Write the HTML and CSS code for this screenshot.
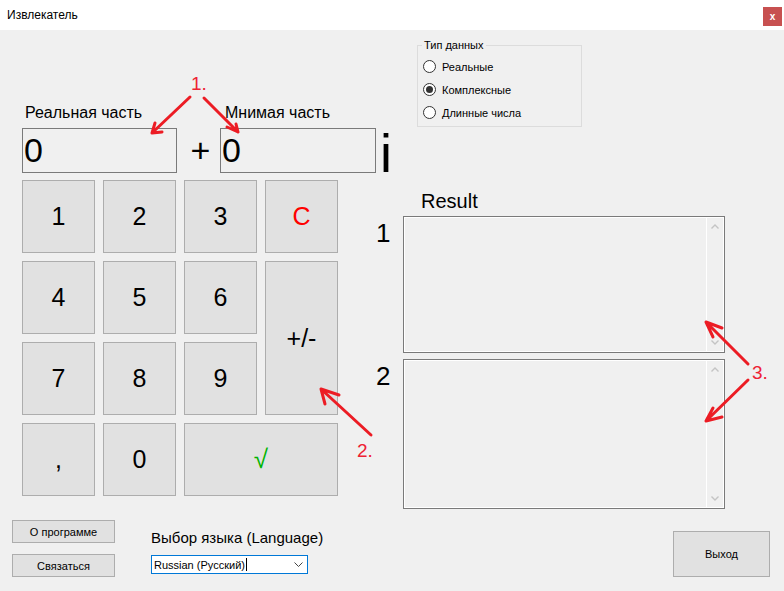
FILE: index.html
```html
<!DOCTYPE html>
<html lang="ru">
<head>
<meta charset="utf-8">
<title>Извлекатель</title>
<link rel="stylesheet" href="styles.css">
</head>
<body>
<div class="window">
  <div class="titlebar">
    <span class="title">Извлекатель</span>
    <span class="close">x</span>
  </div>

  <section class="top">
    <div class="entry">
      <div class="labels">
        <span class="re">Реальная часть</span>
        <span class="im">Мнимая часть</span>
      </div>
      <div class="inputs">
        <div class="field re">0</div>
        <span class="plus">+</span>
        <div class="field im">0</div>
        <span class="imag">i</span>
      </div>
    </div>
    <fieldset class="types">
      <legend>Тип данных</legend>
      <div class="radios">
        <div class="radio"><span class="dot"></span><span>Реальные</span></div>
        <div class="radio checked"><span class="dot"></span><span>Комплексные</span></div>
        <div class="radio"><span class="dot"></span><span>Длинные числа</span></div>
      </div>
    </fieldset>
  </section>

  <section class="middle">
    <div class="keypad">
      <div class="key">1</div>
      <div class="key">2</div>
      <div class="key">3</div>
      <div class="key clear">C</div>
      <div class="key">4</div>
      <div class="key">5</div>
      <div class="key">6</div>
      <div class="key pm">+/-</div>
      <div class="key">7</div>
      <div class="key">8</div>
      <div class="key">9</div>
      <div class="key">,</div>
      <div class="key">0</div>
      <div class="key ok">√</div>
    </div>
    <div class="results">
      <div class="res-head">Result</div>
      <div class="res-num">1</div>
      <div class="box">
        <div class="sb">
          <div class="arr"><svg width="8" height="5" viewBox="0 0 8 5"><path d="M0.5 4.5 L4 1 L7.5 4.5" fill="none" stroke="#c4c4c4" stroke-width="1.4"/></svg></div>
          <div class="arr"><svg width="8" height="5" viewBox="0 0 8 5"><path d="M0.5 0.5 L4 4 L7.5 0.5" fill="none" stroke="#c4c4c4" stroke-width="1.4"/></svg></div>
        </div>
      </div>
      <div class="res-num second">2</div>
      <div class="box second">
        <div class="sb">
          <div class="arr"><svg width="8" height="5" viewBox="0 0 8 5"><path d="M0.5 4.5 L4 1 L7.5 4.5" fill="none" stroke="#c4c4c4" stroke-width="1.4"/></svg></div>
          <div class="arr"><svg width="8" height="5" viewBox="0 0 8 5"><path d="M0.5 0.5 L4 4 L7.5 0.5" fill="none" stroke="#c4c4c4" stroke-width="1.4"/></svg></div>
        </div>
      </div>
    </div>
  </section>

  <section class="bottom">
    <div class="side">
      <div class="btn">О программе</div>
      <div class="btn">Связаться</div>
    </div>
    <div class="lang">
      <div class="lang-label">Выбор языка (Language)</div>
      <div class="combo">
        <span class="combo-text">Russian (Русский)</span><span class="caret"></span>
        <svg class="chev" width="9" height="5" viewBox="0 0 9 5"><path d="M0.5 0.5 L4.5 4.5 L8.5 0.5" fill="none" stroke="#444" stroke-width="1"/></svg>
      </div>
    </div>
    <div class="btn exit">Выход</div>
  </section>

  <svg class="ann" width="784" height="591" viewBox="0 0 784 591">
    <g stroke="#ec1c24" stroke-width="3" stroke-linecap="round" stroke-linejoin="round" fill="none">
      <path d="M190 97 L152 133 M152 133 L162 132 M152 133 L155 123"/>
      <path d="M204 98 L238 132 M238 132 L227 127 M238 132 L236 124"/>
      <path d="M371 435 L321 389 M321 389 L339 395 M321 389 L325 404"/>
      <path d="M748 364 L706 322 M706 322 L722 328 M706 322 L713 337"/>
      <path d="M748 380 L706 421 M706 421 L722 417 M706 421 L713 408"/>
    </g>
    <text class="ann-text" x="191" y="90">1.</text>
    <text class="ann-text" x="357" y="457">2.</text>
    <text class="ann-text" x="752" y="379">3.</text>
  </svg>
</div>
</body>
</html>
```

FILE: styles.css
```css
* { box-sizing: border-box; }
html, body { margin: 0; padding: 0; }
body {
  width: 784px;
  height: 591px;
  background: #f0f0f0;
  font-family: "Liberation Sans", Arial, sans-serif;
  color: #000;
  overflow: hidden;
}
.window {
  position: relative;
  width: 784px;
  height: 591px;
  display: flex;
  flex-direction: column;
}

/* title bar */
.titlebar {
  height: 30px;
  flex: none;
  background: #fff;
  display: flex;
  align-items: center;
  padding-left: 7px;
}
.title { font-size: 12px; flex: 1; }
.close {
  align-self: flex-start;
  margin: 7px 2px 0 0;
  width: 19px;
  height: 19px;
  background: #c75050;
  color: #fff;
  font-weight: bold;
  font-size: 10px;
  line-height: 1;
  display: flex;
  align-items: center;
  justify-content: center;
}

/* top area */
.top {
  height: 150px;
  flex: none;
  display: flex;
}
.entry {
  width: 395px;
  padding: 73px 0 0 22px;
}
.labels {
  display: grid;
  grid-template-columns: 155px 43px 156px;
  height: 20px;
  line-height: 20px;
  font-size: 16px;
  margin-bottom: 5px;
  white-space: nowrap;
}
.labels .re { padding-left: 3px; }
.labels .im { grid-column: 3; padding-left: 5px; }
.inputs {
  display: flex;
  align-items: center;
  height: 45px;
}
.field {
  height: 45px;
  border: 1px solid #7a7a7a;
  font-size: 34px;
  line-height: 43px;
  padding-left: 1px;
}
.field.re { width: 155px; }
.field.im { width: 156px; }
.plus {
  width: 43px;
  padding-left: 4px;
  text-align: center;
  font-size: 34px;
}
.imag {
  align-self: flex-end;
  font-size: 54px;
  line-height: 40px;
  height: 40px;
  margin-left: 4px;
}

.types {
  margin: 9px 0 0 22px;
  width: 165px;
  height: 88px;
  border: 1px solid #dcdcdc;
  padding: 3px 0 0 4px;
  font-size: 11px;
  min-width: 0;
}
.types legend {
  padding: 0 2px;
  line-height: 13px;
}
.radios { display: flex; flex-direction: column; }
.radio {
  height: 23px;
  display: flex;
  align-items: center;
  padding-left: 1px;
}
.dot {
  width: 13px;
  height: 13px;
  border: 1px solid #333;
  border-radius: 50%;
  background: #fff;
  margin-right: 6px;
  display: flex;
  align-items: center;
  justify-content: center;
}
.radio.checked .dot::after {
  content: "";
  width: 7px;
  height: 7px;
  border-radius: 50%;
  background: #333;
}

/* middle */
.middle {
  flex: none;
  display: flex;
  align-items: flex-start;
}
.keypad {
  margin-left: 22px;
  display: grid;
  grid-template-columns: repeat(4, 73px);
  grid-template-rows: repeat(4, 73px);
  gap: 8px;
}
.key {
  background: #e1e1e1;
  border: 1px solid #adadad;
  display: flex;
  align-items: center;
  justify-content: center;
  font-size: 25px;
}
.key.clear { color: #ff0000; }
.key.pm { grid-column: 4; grid-row: 2 / span 2; }
.key.ok { grid-column: 3 / span 2; color: #00b400; font-size: 26px; }

.results {
  margin-left: 38px;
  display: grid;
  grid-template-columns: 27px 322px;
  grid-template-rows: 36px 137px 156px;
}
.res-head {
  grid-column: 2;
  padding: 9px 0 0 18px;
  font-size: 20px;
  line-height: 24px;
}
.res-num {
  font-size: 26px;
  line-height: 30px;
  padding-top: 2px;
}
.res-num.second, .box.second { margin-top: 6px; }
.box {
  border: 1px solid #7a7a7a;
  background: #f0f0f0;
  box-shadow: inset 0 0 0 1px #fff;
  display: flex;
  justify-content: flex-end;
  padding: 1px;
}
.sb {
  width: 17px;
  border-left: 1px solid #fff;
  display: flex;
  flex-direction: column;
  justify-content: space-between;
}
.arr {
  height: 17px;
  display: flex;
  align-items: center;
  justify-content: center;
}
.arr svg { display: block; }

/* bottom */
.bottom {
  flex: 1;
  display: flex;
  align-items: flex-start;
}
.side {
  padding: 11px 0 0 12px;
  display: flex;
  flex-direction: column;
  gap: 11px;
}
.btn {
  width: 103px;
  height: 23px;
  background: #e1e1e1;
  border: 1px solid #adadad;
  font-size: 11px;
  display: flex;
  align-items: center;
  justify-content: center;
}
.lang {
  margin-left: 36px;
  padding-top: 20px;
}
.lang-label {
  font-size: 15px;
  line-height: 18px;
  height: 18px;
  margin-bottom: 8px;
  white-space: nowrap;
}
.combo {
  width: 157px;
  height: 19px;
  border: 1px solid #0078d7;
  background: #fff;
  font-size: 11px;
  display: flex;
  align-items: center;
  padding: 0 4px 0 2px;
}
.combo-text { white-space: nowrap; }
.caret {
  width: 1px;
  height: 13px;
  background: #000;
  margin-left: 1px;
}
.chev { margin-left: auto; display: block; }
.btn.exit {
  margin: 22px 14px 0 auto;
  width: 97px;
  height: 46px;
}

/* annotation overlay */
.ann {
  position: absolute;
  left: 0;
  top: 0;
  pointer-events: none;
}
.ann-text {
  font-family: "Liberation Sans", Arial, sans-serif;
  font-size: 19px;
  fill: #ee2233;
}
```
